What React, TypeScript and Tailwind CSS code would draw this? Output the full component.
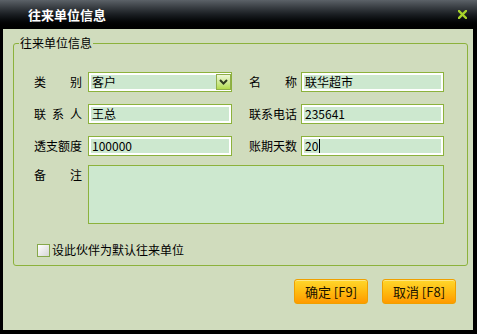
import React from 'react';

const FONT = "font-['Noto_Sans_CJK_SC','Noto_Sans_CJK_JP',sans-serif]";

function Label({ text }: { text: string }) {
  // chars spread across a fixed width, like the old dialog labels
  return (
    <div className="w-[48px] flex justify-between leading-[20px]">
      {text.split('').map((c, i) => (
        <span key={i}>{c}</span>
      ))}
    </div>
  );
}

function Field({ value, width, caret }: { value: string; width: string; caret?: boolean }) {
  return (
    <div
      className={`${width} h-[20px] border border-[#8cb23c] bg-[#cde8cf] shadow-[inset_0_0_0_2px_#ffffff] flex items-center pl-[3px] leading-[16px]`}
    >
      <span>{value}</span>
      {caret && <span className="w-px h-[14px] bg-black ml-px" />}
    </div>
  );
}

function Select({ value }: { value: string }) {
  return (
    <div className="w-[144px] h-[20px] border border-[#8cb23c] bg-[#cde8cf] shadow-[inset_0_0_0_2px_#ffffff] flex items-center pl-[3px] leading-[16px]">
      <span className="flex-1">{value}</span>
      <div className="w-[15px] h-[16px] border border-[#8fae4a] bg-gradient-to-b from-[#eef7d6] to-[#b3db47] flex items-center justify-center">
        <svg width="9" height="6" viewBox="0 0 9 6">
          <path d="M1 1 L4.5 4.5 L8 1" fill="none" stroke="#2f3a1f" strokeWidth="2" />
        </svg>
      </div>
    </div>
  );
}

function Button({ text }: { text: string }) {
  return (
    <button className="h-[25px] w-[74px] rounded-[3px] border border-[#efa000] bg-gradient-to-b from-[#ffd72a] via-[#ffbb10] to-[#ff9a00] shadow-[inset_0_1px_0_#ffe680] text-[13px] text-[#1a1200] leading-[23px]">
      {text}
    </button>
  );
}

export default function App() {
  return (
    <div className={`w-[477px] h-[334px] bg-black flex flex-col ${FONT} text-[12px] text-black`}>
      {/* Title bar */}
      <div className="h-[29px] flex items-center justify-between pl-[28px] pr-[10px] bg-gradient-to-b from-[#5c6268] via-[#1a1e22] to-black">
        <span className="text-white font-bold text-[13px] leading-[16px]">往来单位信息</span>
        <svg width="9" height="9" viewBox="0 0 9 9">
          <path d="M1 1 L8 8 M8 1 L1 8" stroke="#a8d42a" strokeWidth="2.4" strokeLinecap="square" />
        </svg>
      </div>

      {/* Body */}
      <div className="flex-1 ml-[3px] mr-[4px] mb-[4px] bg-[#d0dcbd] flex flex-col pt-[14px] pl-[10px]">
        <div className="relative w-[455px] h-[223px] border border-[#8cb23c] rounded-[3px] flex flex-col pl-[20px]">
          <span className="absolute -top-[9px] left-[5px] px-px bg-[#d0dcbd] leading-[16px]">往来单位信息</span>

          <div className="mt-[28px] flex items-center">
            <Label text="类别" />
            <div className="ml-[6px]">
              <Select value="客户" />
            </div>
            <div className="ml-[17px]">
              <Label text="名称" />
            </div>
            <div className="ml-[4px]">
              <Field value="联华超市" width="w-[143px]" />
            </div>
          </div>

          <div className="mt-[12px] flex items-center">
            <Label text="联系人" />
            <div className="ml-[6px]">
              <Field value="王总" width="w-[144px]" />
            </div>
            <div className="ml-[17px]">
              <Label text="联系电话" />
            </div>
            <div className="ml-[4px]">
              <Field value="235641" width="w-[143px]" />
            </div>
          </div>

          <div className="mt-[12px] flex items-center">
            <Label text="透支额度" />
            <div className="ml-[6px]">
              <Field value="100000" width="w-[144px]" />
            </div>
            <div className="ml-[17px]">
              <Label text="账期天数" />
            </div>
            <div className="ml-[4px]">
              <Field value="20" width="w-[143px]" caret />
            </div>
          </div>

          <div className="mt-[9px] flex items-start">
            <Label text="备注" />
            <div className="ml-[6px] w-[356px] h-[59px] border border-[#8cb23c] bg-[#cde8cf]" />
          </div>

          <div className="mt-[18px] ml-[3px] flex items-center gap-[2px]">
            <div className="w-[13px] h-[13px] border border-[#86a84a] bg-gradient-to-br from-white to-[#d6d6d6]" />
            <span className="text-[12px] leading-[16px]">设此伙伴为默认往来单位</span>
          </div>
        </div>

        <div className="mt-[13px] w-[455px] flex justify-end gap-[14px] pr-[12px]">
          <Button text="确定 [F9]" />
          <Button text="取消 [F8]" />
        </div>
      </div>
    </div>
  );
}
